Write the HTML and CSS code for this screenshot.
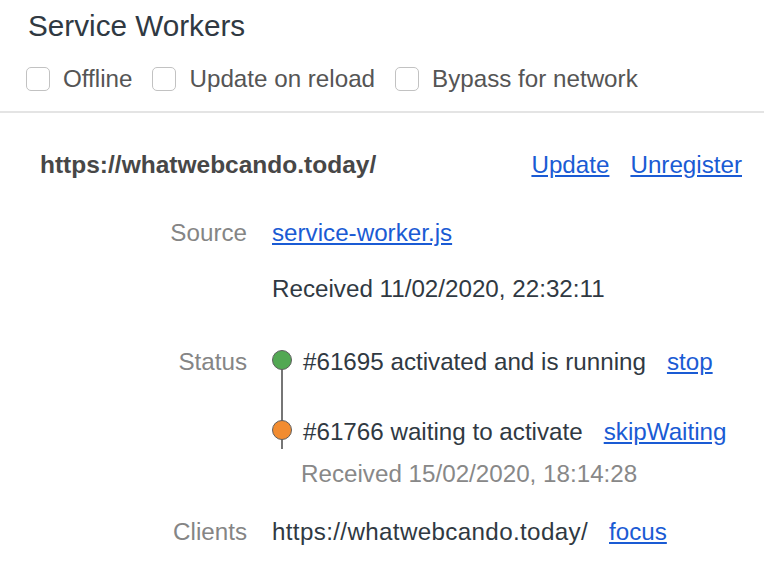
FILE: index.html
```html
<!DOCTYPE html>
<html>
<head>
<meta charset="utf-8">
<link rel="stylesheet" href="styles.css">
</head>
<body>
<div class="panel">
  <header class="header">
    <h1 class="title">Service Workers</h1>
    <div class="toolbar">
      <label class="check"><input type="checkbox" class="box"><span>Offline</span></label>
      <label class="check"><input type="checkbox" class="box"><span>Update on reload</span></label>
      <label class="check"><input type="checkbox" class="box"><span>Bypass for network</span></label>
    </div>
  </header>
  <section class="registration">
    <div class="origin-row">
      <div class="origin">https://whatwebcando.today/</div>
      <div class="actions">
        <a class="link" href="#">Update</a>
        <a class="link" href="#">Unregister</a>
      </div>
    </div>
    <div class="field field-source">
      <div class="label">Source</div>
      <div class="value">
        <div class="line"><a class="link" href="#">service-worker.js</a></div>
        <div class="line received">Received 11/02/2020, 22:32:11</div>
      </div>
    </div>
    <div class="field field-status">
      <div class="label">Status</div>
      <div class="value versions">
        <div class="version">
          <span class="dot dot-green"></span>
          <span class="vtext">#61695 activated and is running</span>
          <a class="link" href="#">stop</a>
        </div>
        <div class="version version-waiting">
          <span class="dot dot-orange"></span>
          <span class="vtext">#61766 waiting to activate</span>
          <a class="link" href="#">skipWaiting</a>
        </div>
        <div class="sub">Received 15/02/2020, 18:14:28</div>
      </div>
    </div>
    <div class="field field-clients">
      <div class="label">Clients</div>
      <div class="value clients">
        <span class="client-url">https://whatwebcando.today/</span>
        <a class="link" href="#">focus</a>
      </div>
    </div>
  </section>
</div>
</body>
</html>
```
FILE: styles.css
```css
* { box-sizing: border-box; }
html, body { margin: 0; padding: 0; background: #fff; }
body {
  font-family: "Liberation Sans", Arial, Helvetica, sans-serif;
  font-size: 24.2px;
  color: #303942;
  width: 764px;
  height: 568px;
  overflow: hidden;
}
.header {
  padding: 0 0 6px 0;
  border-bottom: 2px solid #e4e4e4;
}
.title {
  margin: 0;
  padding-left: 28px;
  font-size: 29.7px;
  font-weight: normal;
  line-height: 52px;
  color: #303942;
}
.toolbar {
  display: flex;
  align-items: center;
  height: 53px;
  padding-left: 26px;
  gap: 20px;
}
.check {
  display: flex;
  align-items: center;
  gap: 13px;
  color: #555;
  line-height: 30px;
}
.box {
  appearance: none;
  -webkit-appearance: none;
  margin: 0;
  width: 24px;
  height: 24px;
  border: 1.5px solid #c2c2c2;
  border-radius: 5px;
  background: #fff;
}
.registration {
  padding: 0 22px 0 40px;
}
.origin-row {
  display: flex;
  justify-content: space-between;
  align-items: center;
  margin-top: 37px;
  line-height: 30px;
}
.origin {
  font-weight: bold;
  font-size: 24.5px;
  color: #474747;
}
.actions {
  display: flex;
  gap: 21px;
}
.link {
  color: #1a5bd4;
  text-decoration: underline;
}
.field {
  display: flex;
  gap: 25px;
  line-height: 30px;
}
.label {
  width: 207px;
  text-align: right;
  color: #858585;
  flex: none;
}
.field-source { margin-top: 38px; }
.received { margin-top: 26px; }
.field-status { margin-top: 43px; }
.versions {
  position: relative;
}
.versions::before {
  content: "";
  position: absolute;
  left: 9px;
  top: 13px;
  width: 2px;
  height: 89px;
  background: #767676;
}
.version {
  display: flex;
  align-items: center;
  position: relative;
}
.version-waiting { margin-top: 39.5px; }
.dot {
  width: 20px;
  height: 20px;
  border-radius: 50%;
  border: 1.5px solid #5f5f5f;
  margin-right: 11px;
  margin-bottom: 4px;
  position: relative;
  flex: none;
}
.dot-green { background: #52a853; }
.dot-orange { background: #f28c30; }
.vtext { margin-right: 21px; }
.sub {
  margin-top: 12px;
  padding-left: 29px;
  color: #888;
}
.field-clients { margin-top: 28px; }
.clients {
  display: flex;
  gap: 21px;
}
.client-url { letter-spacing: 0.35px; }
```
